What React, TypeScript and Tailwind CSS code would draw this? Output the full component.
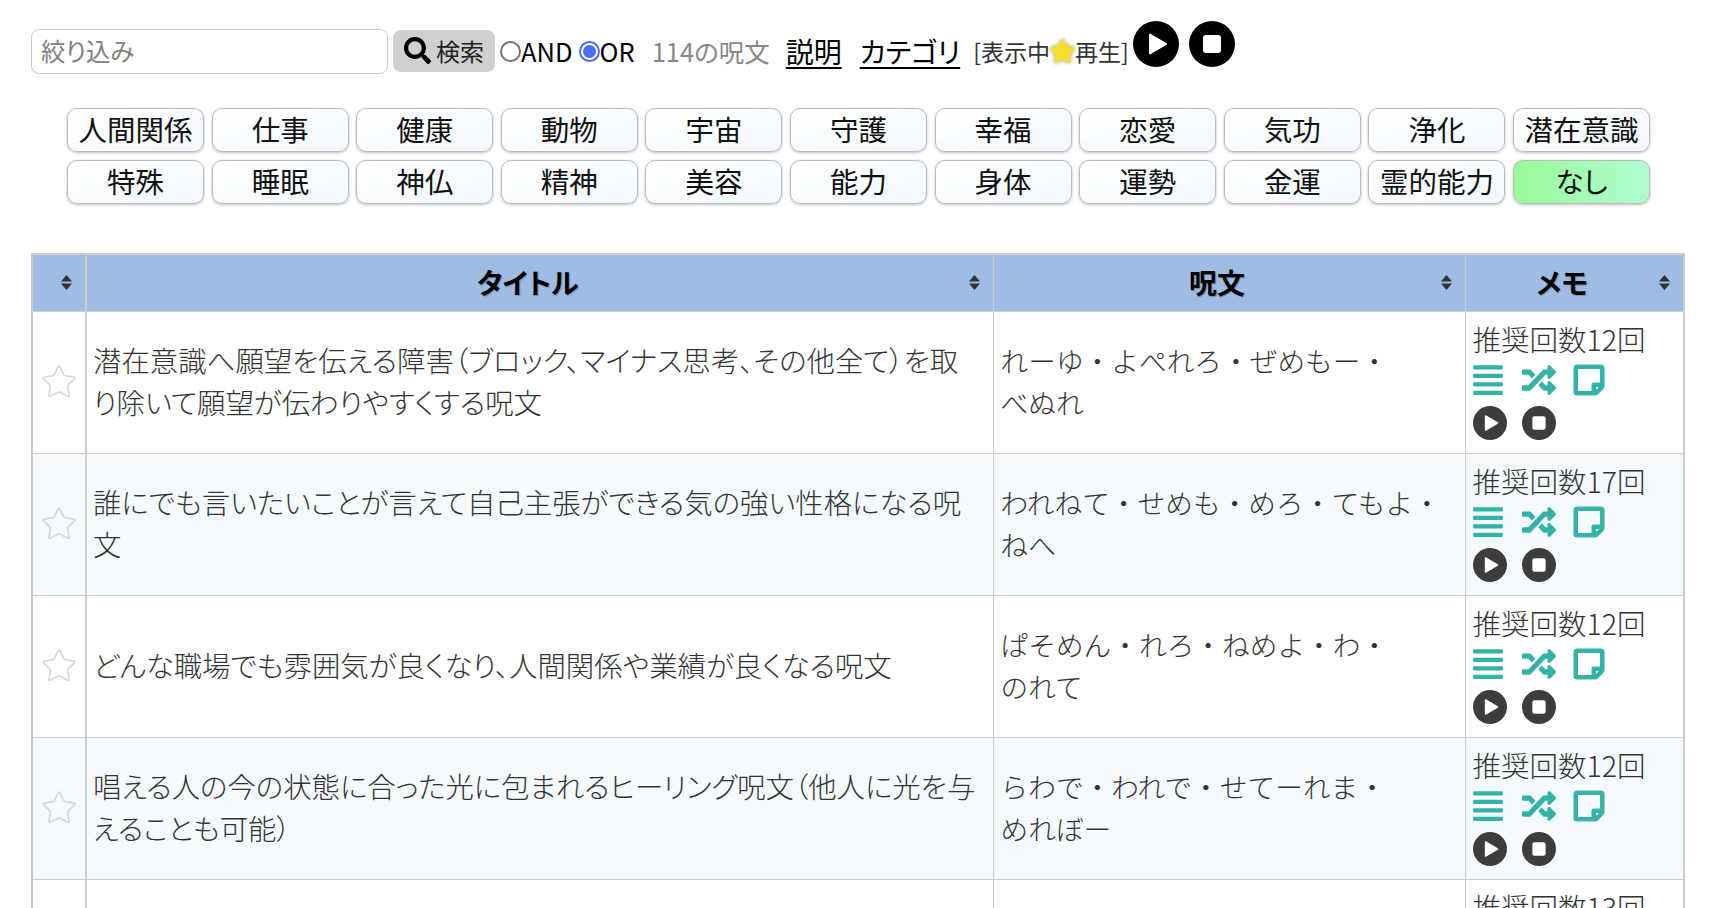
import { Star } from 'lucide-react';
import { FaAlignJustify, FaRandom, FaRegStickyNote, FaSearch } from 'react-icons/fa';

const tagRows = [
  ['人間関係', '仕事', '健康', '動物', '宇宙', '守護', '幸福', '恋愛', '気功', '浄化', '潜在意識'],
  ['特殊', '睡眠', '神仏', '精神', '美容', '能力', '身体', '運勢', '金運', '霊的能力', 'なし'],
];

// the fifth row only shows the top of its memo before the window cuts it off
const rows = [
  {
    title: '潜在意識へ願望を伝える障害（ブロック、マイナス思考、その他全て）を取り除いて願望が伝わりやすくする呪文',
    spell: ['れーゆ・', 'よぺれろ・', 'ぜめもー・', 'べぬれ'],
    memo: '推奨回数12回',
  },
  {
    title: '誰にでも言いたいことが言えて自己主張ができる気の強い性格になる呪文',
    spell: ['われねて・', 'せめも・', 'めろ・', 'てもよ・', 'ねへ'],
    memo: '推奨回数17回',
  },
  {
    title: 'どんな職場でも雰囲気が良くなり、人間関係や業績が良くなる呪文',
    spell: ['ぱそめん・', 'れろ・', 'ねめよ・', 'わ・', 'のれて'],
    memo: '推奨回数12回',
  },
  {
    title: '唱える人の今の状態に合った光に包まれるヒーリング呪文（他人に光を与えることも可能）',
    spell: ['らわで・', 'われで・', 'せてーれま・', 'めれぼー'],
    memo: '推奨回数12回',
  },
  {
    title: '',
    spell: [],
    memo: '推奨回数13回',
  },
];

function SortMark() {
  return (
    <svg className="absolute right-[12px] top-[20px] text-[#333]" width="13" height="15" viewBox="0 0 14 16">
      <path d="M7 0 13 7H1zM7 16 1 9h12z" fill="currentColor" />
    </svg>
  );
}

function RoundIcon({ big, stop }: { big?: boolean; stop?: boolean }) {
  const size = big ? 'w-[46px] h-[46px] text-black' : 'w-[34px] h-[34px] text-[#3f3c3c]';
  return (
    <svg className={size} viewBox="0 0 46 46">
      <circle cx="23" cy="23" r="23" fill="currentColor" />
      {stop ? (
        <rect x="14" y="14" width="18" height="18" rx="3" fill="white" />
      ) : (
        <path d="M17 13.5 33 23 17 32.5Z" fill="white" stroke="white" strokeWidth="2" strokeLinejoin="round" />
      )}
    </svg>
  );
}

export default function App() {
  return (
    <div className="h-screen overflow-hidden bg-white px-[31px] pt-[28px] font-['Noto_Sans_CJK_JP','Noto_Sans',sans-serif] [font-feature-settings:'palt']">
      <div className="flex items-center h-[46px] text-[25.5px]">
        <input
          placeholder="絞り込み"
          className="w-[357px] h-[45px] px-[9px] pb-[2px] rounded-[8px] border border-[#ccc] text-[24.5px] placeholder:text-[#808080] outline-none"
        />
        <button className="ml-[5px] w-[102px] h-[42px] pb-[1px] flex items-center justify-center gap-[5px] rounded-[8px] bg-[#d0d0d0] text-[24px] text-[#222]">
          <FaSearch className="w-[27px] h-[27px] text-black" />
          検索
        </button>
        <label className="ml-[5px] flex items-center text-black">
          <span className="w-[21px] h-[21px] rounded-full border-2 border-[#777]" />
          AND
        </label>
        <label className="ml-[6px] flex items-center text-black">
          <span className="w-[21px] h-[21px] rounded-full border-2 border-[#4a6cf7] flex items-center justify-center">
            <span className="w-[13px] h-[13px] rounded-full bg-[#4a6cf7]" />
          </span>
          OR
        </label>
        <span className="ml-[17px] text-[#888]">114の呪文</span>
        <a className="ml-[16px] text-[28px] text-black underline underline-offset-4">説明</a>
        <a className="ml-[18px] text-[28px] text-black underline underline-offset-4">カテゴリ</a>
        <span className="ml-[13px] flex items-center text-[23px] text-[#333]">
          [表示中
          <Star
            className="w-[27px] h-[27px] -mx-[1px] text-[#f5e02a] drop-shadow-[0_0_2px_rgba(0,0,0,0.4)]"
            fill="#f5e02a"
            strokeWidth={2}
          />
          再生]
        </span>
        <span className="ml-[4px] -mt-[14px] flex gap-[10px]">
          <RoundIcon big />
          <RoundIcon big stop />
        </span>
      </div>

      <div className="mt-[34px] flex flex-col gap-[8px] items-end pr-[35px]">
        {tagRows.map((row, i) => (
          <div key={i} className="flex gap-[7.6px]">
            {row.map((tag) => (
              <button
                key={tag}
                className={`w-[137px] h-[44px] pb-[2px] rounded-[10px] border border-[#bbb] shadow-[0_1px_3px_rgba(0,0,0,0.25)] text-[28.5px] leading-none text-[#111] whitespace-nowrap ${
                  tag === 'なし'
                    ? 'bg-gradient-to-r from-[#98fb98] to-[#b0fbd0]'
                    : 'bg-gradient-to-br from-white to-[#f2f9ff]'
                }`}
              >
                {tag}
              </button>
            ))}
          </div>
        ))}
      </div>

      <table className="mt-[49px] w-[1654px] table-fixed border-collapse border-[2px] border-[#ccc]">
        <colgroup>
          <col className="w-[54px]" />
          <col className="w-[907px]" />
          <col className="w-[472px]" />
          <col />
        </colgroup>
        <thead>
          <tr className="h-[57px] bg-[#9fbde4] text-[28px] text-black font-bold [text-shadow:1px_1px_1px_rgba(0,0,0,0.25)]">
            <th className="relative border border-[#ccc] border-r-2"><SortMark /></th>
            <th className="relative border border-[#ccc] pr-[24px] pb-[2px]">タイトル<SortMark /></th>
            <th className="relative border border-[#ccc] pr-[24px] pb-[2px]">呪文<SortMark /></th>
            <th className="relative border border-[#ccc] pr-[24px] pb-[2px]">メモ<SortMark /></th>
          </tr>
        </thead>
        <tbody className="leading-[42px] text-[#333] font-light">
          {rows.map((row, i) => (
            <tr key={i} className={`h-[142px] ${i % 2 === 1 ? 'bg-[#f5faff]' : 'bg-white'}`}>
              <td className="border border-[#ccc] border-r-2 align-middle">
                <Star className="mx-auto w-[38px] h-[38px] text-[#d8d8d8]" strokeWidth={1.1} />
              </td>
              <td className="border border-[#ccc] pl-[6px] pr-[14px] pb-[2px] text-[28.4px]">{row.title}</td>
              <td className="border border-[#ccc] px-[7px] pb-[2px] text-[27.7px] [font-feature-settings:normal]">
                {row.spell.map((part) => (
                  <span key={part} className="whitespace-nowrap">{part}</span>
                ))}
              </td>
              <td className="border border-[#ccc] px-[7px] pt-[6px] align-top text-[28.5px]">
                <div className="whitespace-nowrap">{row.memo}</div>
                <div className="mt-[3px] -ml-[2px] flex text-[#33b3a6]">
                  <FaAlignJustify size={34} />
                  <FaRandom size={34} className="ml-[17px]" />
                  <FaRegStickyNote size={34} className="ml-[16px]" stroke="currentColor" strokeWidth={20} />
                </div>
                <div className="mt-[9px] flex gap-[15px]">
                  <RoundIcon />
                  <RoundIcon stop />
                </div>
              </td>
            </tr>
          ))}
        </tbody>
      </table>
    </div>
  );
}
